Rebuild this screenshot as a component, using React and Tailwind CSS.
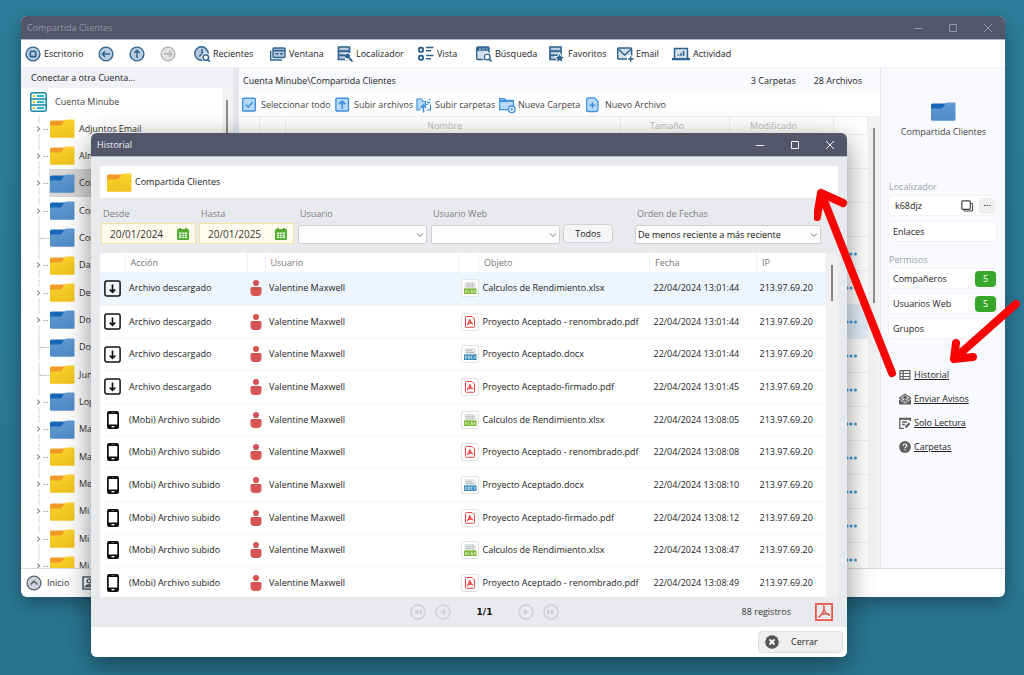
import React from "react";

const NAVY = "#2f6391";
const PALE = "#b9cbdc";
const SKY = "#3d8fe0";
const SKYPALE = "#b9d9f9";

function Folder({ blue }) {
  const id = blue ? "folder-blue" : "folder-yellow";
  return (
    <svg viewBox="0 0 25 19" className="h-[19px] w-[25px] shrink-0" aria-hidden="true">
      <defs>
        <linearGradient id={id} x1="0" y1="0" x2="0" y2="1">
          <stop offset="0" stopColor={blue ? "#629bd2" : "#fbd32e"} />
          <stop offset="1" stopColor={blue ? "#4f8bc6" : "#f0c31c"} />
        </linearGradient>
      </defs>
      <path d="M0 3Q0 1.500 1.500 1.500H15V9H0Z" fill={blue ? "#1667b8" : "#f19a26"} />
      <path d="M0 6.500H10C13 6.500 13 0.500 17 0.500H23.500Q24.500 0.500 24.500 1.500V17.500Q24.500 18.800 23.200 18.800H1.300Q0 18.800 0 17.500Z" fill={`url(#${id})`} />
    </svg>
  );
}

const svg = (children, className = "h-4 w-4") => (
  <svg viewBox="0 0 16 16" className={`${className} shrink-0 overflow-visible`} fill="none" strokeWidth="1.4" aria-hidden="true">
    {children}
  </svg>
);

const circle = (stroke, fill, path, w = 1.5) => (
  <g stroke={stroke}>
    <circle cx="8" cy="8" r="6.900" fill={fill} />
    <path d={path} strokeWidth={w} />
  </g>
);

const icons = {
  desk: svg(
    <g stroke={NAVY}>
      <circle cx="8" cy="8" r="6.900" fill={PALE} />
      <rect x="5.300" y="5.300" width="5.400" height="5.400" rx="1" strokeWidth="1.700" />
    </g>
  ),
  back: svg(circle(NAVY, PALE, "M12 8H4.500M7 5.300L4.300 8L7 10.700")),
  up: svg(circle(NAVY, PALE, "M8 12V4.500M5.300 7L8 4.300L10.700 7")),
  forward: svg(circle("#b4b4b4", "#e2e2e2", "M4 8H11.500M9 5.300L11.700 8L9 10.700")),
  recent: svg(
    <g stroke={NAVY}>
      <circle cx="7.500" cy="7.500" r="6.700" fill={PALE} />
      <path d="M8 3V8L5 10.500" strokeWidth="1.600" />
      <circle cx="11.800" cy="11.500" r="4.500" fill="#fff" stroke="none" />
      <circle cx="11.800" cy="11.500" r="2.800" strokeWidth="1.500" />
      <path d="M13.800 13.500L15.800 15.700" strokeWidth="1.700" />
    </g>
  ),
  window: svg(
    <g stroke={NAVY}>
      <path d="M0.700 4.500V14H12" />
      <rect x="3" y="2" width="12" height="9.500" rx="1" fill={PALE} />
      <path d="M3 4.700H15" strokeWidth="1.800" />
      <path d="M5.500 7.800H8.500M10 7.800H13" stroke={NAVY} />
    </g>
  ),
  locate: svg(
    <g stroke={NAVY}>
      <path d="M1.500 1H12.500V13.500H1.500Z" fill={PALE} strokeWidth="1.700" />
      <path d="M1 5.200H12.500M1 9.400H12.500" strokeWidth="1.700" />
      <path d="M8 7H14V14H8Z" fill="#fff" stroke="none" />
      <circle cx="10.500" cy="10" r="2.500" fill={NAVY} stroke="none" />
      <path d="M12 11.500L15.500 15.500M13 14.500L14.500 13" strokeWidth="1.700" />
    </g>
  ),
  view: svg(
    <g stroke={NAVY}>
      <rect x="1" y="1.700" width="4" height="4" rx="1" strokeWidth="1.900" />
      <rect x="1" y="9.700" width="4" height="4" rx="1" strokeWidth="1.900" />
      <path d="M8 1.500H15.500M8 4.700H13M8 9.500H15.500M8 12.700H13" strokeWidth="1.500" />
    </g>
  ),
  search: svg(
    <g stroke={NAVY}>
      <path d="M0.700 2.500V12Q0.700 13.500 2 13.500H13V2.500Q13 1 12 1H2Q0.700 1 0.700 2.500Z" fill="#d4dfe9" />
      <path d="M0.700 3H13" strokeWidth="3.400" />
      <path d="M3 3H5M6.500 3H8.500M10 3H11.500" stroke="#d4dfe9" strokeWidth="1" />
      <circle cx="11.200" cy="11" r="4.500" fill="#fff" stroke="none" />
      <circle cx="11.200" cy="11" r="2.900" />
      <path d="M13.300 13.200L15.500 15.500" strokeWidth="1.700" />
    </g>
  ),
  favorite: svg(
    <g stroke={NAVY}>
      <path d="M1 1H12V13.500H1Z" fill={PALE} strokeWidth="1.700" />
      <path d="M1 5.200H12M1 9.400H12" strokeWidth="1.700" />
      <path d="M10.700 6.800L12.300 10.200L15.900 10.600L13.200 13L14 16.500L10.700 14.700L7.400 16.500L8.200 13L5.500 10.600L9.100 10.200Z" fill={NAVY} stroke="#fff" strokeWidth="1" />
    </g>
  ),
  email: svg(
    <g stroke={NAVY}>
      <rect x="0.700" y="2" width="14" height="11" rx="1" fill="#d4dfe9" />
      <path d="M1 3L7.700 9L14.500 3" />
      <path d="M10 9.500H17V16.500H10Z" fill="#fff" stroke="none" />
      <path d="M11 13H16.500M13.700 10.300V15.700" strokeWidth="1.500" />
    </g>
  ),
  activity: (
    <svg viewBox="0 0 18 16" className="h-4 w-[18px] shrink-0" fill="none" stroke={NAVY} aria-hidden="true">
      <path d="M2.500 12V2.500H15.500V12" fill="#d4dfe9" strokeWidth="1.500" />
      <path d="M0 13.200H18" strokeWidth="2.300" />
      <path d="M6.500 10V8.500M9 10V7M11.500 10V5" strokeWidth="1.400" />
    </svg>
  ),
  check: svg(
    <g stroke={SKY}>
      <rect x="0.700" y="1.200" width="12.600" height="12.800" rx="1" fill={SKYPALE} />
      <path d="M3.700 7.500L6.200 10.200L10.700 5" strokeWidth="1.500" />
    </g>,
    "h-4 w-4"
  ),
  upFile: svg(
    <g stroke={SKY}>
      <rect x="0.900" y="1.200" width="12.600" height="12.800" rx="1" fill={SKYPALE} />
      <path d="M7.200 12V4.500M4.200 7.200L7.200 4.200L10.200 7.200" strokeWidth="1.700" />
    </g>
  ),
  upFolder: svg(
    <g stroke={SKY}>
      <path d="M4.500 13H1V2H5.500L7 4.500H9.500V7.500H12" fill={SKYPALE} strokeWidth="1.200" />
      <path d="M10.500 13H14.500V7.500M11 4.500L12.500 6L14.500 5M13 3L14.500 2" strokeWidth="1.200" />
      <path d="M7.500 15.500V8M4.800 10.700L7.500 8L10.200 10.700" strokeWidth="1.600" />
    </g>
  ),
  newFolder: svg(
    <g stroke={SKY}>
      <path d="M0.700 1.700H5.500L7 3.700H14.500V12.700H0.700Z" fill={SKYPALE} strokeWidth="1.200" />
      <path d="M0.700 4H7L8 3.700H14.500" strokeWidth="1.900" />
      <circle cx="12.800" cy="12.300" r="3.300" fill="#fff" />
      <path d="M11.200 12.300H14.400M12.800 10.700V13.900" strokeWidth="1.100" />
    </g>
  ),
  newFile: svg(
    <g stroke={SKY}>
      <path d="M0.700 2.300Q0.700 0.800 2.200 0.800H8.500L12 4.500V13Q12 14.500 10.500 14.500H2.200Q0.700 14.500 0.700 13Z" fill={SKYPALE} strokeWidth="1.300" />
      <path d="M3.400 8.200H9.400M6.400 5.200V11.200" strokeWidth="1.500" />
    </g>
  ),
  start: svg(circle("#5a6370", "#cdd3da", "M4.500 9.500L8 6.200L11.500 9.500", 1.7)),
  contact: svg(
    <g stroke="#5a6370">
      <path d="M15 2H1V14H15" strokeWidth="1.600" />
      <circle cx="7" cy="6" r="1.900" />
      <path d="M3.500 11.500Q7 8 10.500 11.500Z" />
    </g>
  ),
};

const mainTools = [
  ["desk", "Escritorio", "w-[73px]"],
  ["back", "", "w-[31px]"],
  ["up", "", "w-[31px]"],
  ["forward", "", "w-[34px]"],
  ["recent", "Recientes", "w-[76px]"],
  ["window", "Ventana", "w-[67px]"],
  ["locate", "Localizador", "w-[81px]"],
  ["view", "Vista", "w-[58px]"],
  ["search", "Búsqueda", "w-[73px]"],
  ["favorite", "Favoritos", "w-[68px]"],
  ["email", "Email", "w-[55px]"],
  ["activity", "Actividad", "w-[62px]"],
];

const toolNames = { back: "Atrás", up: "Subir", forward: "Adelante" };

const fileTools = [
  ["check", "Seleccionar todo", "w-[93px]"],
  ["upFile", "Subir archivos", "w-[81px]"],
  ["upFolder", "Subir carpetas", "w-[83px]"],
  ["newFolder", "Nueva Carpeta", "w-[87px]"],
  ["newFile", "Nuevo Archivo", "w-[84px]"],
];

const tree = [
  ["Adjuntos Email", false, true],
  ["Alm", false, true],
  ["Com", true, true],
  ["Com", true, true],
  ["Com", true, false],
  ["Dat", false, true],
  ["Dep", false, true],
  ["Doc", true, true],
  ["Doc", true, false],
  ["Jun", false, false],
  ["Log", true, true],
  ["Ma", true, true],
  ["Ma", false, true],
  ["Me", false, true],
  ["Mi", false, true],
  ["Mi", false, true],
  ["Mi", false, true],
];

const D = "Archivo descargado";
const M = "(Mobi) Archivo subido";
const rows = [
  [D, "xlsx", "Calculos de Rendimiento.xlsx", "13:01:44"],
  [D, "pdf", "Proyecto Aceptado - renombrado.pdf", "13:01:44"],
  [D, "docx", "Proyecto Aceptado.docx", "13:01:44"],
  [D, "pdf", "Proyecto Aceptado-firmado.pdf", "13:01:45"],
  [M, "xlsx", "Calculos de Rendimiento.xlsx", "13:08:05"],
  [M, "pdf", "Proyecto Aceptado - renombrado.pdf", "13:08:08"],
  [M, "docx", "Proyecto Aceptado.docx", "13:08:10"],
  [M, "pdf", "Proyecto Aceptado-firmado.pdf", "13:08:12"],
  [M, "xlsx", "Calculos de Rendimiento.xlsx", "13:08:47"],
  [M, "pdf", "Proyecto Aceptado - renombrado.pdf", "13:08:49"],
];

function TitleBar({ title, active }) {
  return (
    <header
      className={`flex h-6 shrink-0 items-center justify-between border-b border-[#b4b6c0] bg-[#535669] pr-3 pl-1.5 ${
        active ? "text-[#f0f0f4]" : "text-[#9295a4]"
      }`}
    >
      <h1>{title}</h1>
      <div className="flex items-center gap-[25px]">
        {[
          ["Minimizar", "M1 5.500H9"],
          ["Maximizar", "M1.500 1.500H8.500V8.500H1.500Z"],
          ["Cerrar ventana", "M1 1L9 9M9 1L1 9"],
        ].map(([name, d]) => (
          <button key={name} aria-label={name}>
            <svg viewBox="0 0 10 10" className="h-2.5 w-2.5" fill="none" stroke="currentColor" strokeWidth="1">
              <path d={d} />
            </svg>
          </button>
        ))}
      </div>
    </header>
  );
}

function Toolbar({ items }) {
  return items.map(([icon, label, width]) => (
    <button
      key={icon}
      aria-label={label || toolNames[icon]}
      className={`flex shrink-0 items-center gap-[3px] whitespace-nowrap ${width}`}
    >
      {icons[icon]}
      {label}
    </button>
  ));
}

function TreeRow({ name, blue, chevron, selected }) {
  return (
    <li className="h-[27px] nth-[3n]:h-7">
      <button className="flex h-full w-full items-center pl-3 text-left text-[#333]">
        <svg viewBox="0 0 17 28" className="h-7 w-4 shrink-0" fill="none" stroke="#a8a8a8" aria-hidden="true">
          <path d={chevron ? "M6.500 0V8M6.500 20V28" : "M6.500 0V28"} strokeDasharray="1 1" />
          <path d={chevron ? "M11 14.500H17" : "M7 14.500H17"} strokeDasharray="2 1" />
          {chevron && <path d="M4.500 11.500L7 14L4.500 16.500" stroke="#888" strokeWidth="1.200" />}
        </svg>
        <span className={`flex h-full flex-1 items-center gap-1 pl-px ${selected ? "bg-[#d7d7d7]" : ""}`}>
          <Folder blue={blue} />
          {name}
        </span>
      </button>
    </li>
  );
}

function Sidebar() {
  return (
    <aside className="flex w-[212px] shrink-0 flex-col">
      <button className="h-5 shrink-0 bg-[#f0f2f7] pl-2.5 text-left text-[#222]">Conectar a otra Cuenta...</button>
      <div className="flex min-h-0 flex-1">
        <div className="min-w-0 flex-1 overflow-hidden">
          <div className="flex h-[27px] items-center gap-2 pl-[9px] text-[#444]">
            <svg viewBox="0 0 17 20" className="h-5 w-[17px]" fill="none" stroke="#1d86ab" aria-hidden="true">
              <rect x="0.800" y="0.800" width="15.400" height="18.400" rx="2" fill="#eafaff" strokeWidth="1.500" />
              <path d="M1 7H16M1 13H16" strokeWidth="1.500" />
              <path d="M7 4H14M7 10H14M7 16H14" stroke="#27b5cf" strokeWidth="1.800" />
              <path d="M3 4H5M3 10H5M3 16H5" stroke="#f3c313" strokeWidth="2.200" />
            </svg>
            Cuenta Minube
          </div>
          <ul>
            {tree.map(([name, blue, chevron], i) => (
              <TreeRow key={i} name={name} blue={blue} chevron={chevron} selected={i === 2} />
            ))}
          </ul>
        </div>
        <div className="w-[11px] bg-[#f3f3f3] px-1 pt-3">
          <div className="h-36 w-0.5 bg-[#8a8a8a]" />
        </div>
      </div>
    </aside>
  );
}

function FileTable() {
  return (
    <div className="flex min-h-0 flex-1 overflow-hidden">
      <div className="min-w-0 flex-1">
        <table className="w-full table-fixed border-collapse">
          <colgroup>
            <col className="w-5" />
            <col className="w-[26px]" />
            <col />
            <col className="w-[109px]" />
            <col className="w-[104px]" />
            <col className="w-[34px]" />
          </colgroup>
          <thead>
            <tr className="h-[18px] border-y border-[#efefef] text-[#bdbdbd] [&>th]:border-r [&>th]:border-[#efefef] [&>th]:py-0 [&>th]:pr-4 [&>th]:pl-0 [&>th]:font-normal">
              <th />
              <th />
              <th>Nombre</th>
              <th>Tamaño</th>
              <th>Modificado</th>
              <th />
            </tr>
          </thead>
          <tbody>
            {Array.from({ length: 13 }, (_, i) => (
              <tr key={i} className={`h-[34px] border-b border-[#efefef] ${i === 5 ? "bg-[#e4effa]" : ""}`}>
                <td colSpan={5} />
                <td className="p-0">
                  {i > 2 && (
                    <button aria-label="Opciones" className="flex pl-[11px]">
                      <svg viewBox="0 0 12 4" className="h-1 w-3" fill="#3d9ad6">
                        <circle cx="2" cy="2" r="1.500" />
                        <circle cx="6" cy="2" r="1.500" />
                        <circle cx="10.500" cy="2" r="1.500" />
                      </svg>
                    </button>
                  )}
                </td>
              </tr>
            ))}
          </tbody>
        </table>
      </div>
      <div className="w-3 bg-[#f1f1f1] px-[5px] pt-3">
        <div className="h-[175px] w-0.5 bg-[#8f8f8f]" />
      </div>
    </div>
  );
}

function Badge() {
  return <span className="flex h-4 w-[21px] items-center justify-center rounded-sm bg-[#38a52b] text-white">5</span>;
}

const linkIcons = [
  ["Historial", (
    <g>
      <rect x="0.500" y="1" width="11" height="10" fill="#5f5f5f" />
      <path d="M1.700 2.300H3.500V4H1.700ZM4.800 2.300H10.300V4H4.800ZM1.700 5.100H3.500V6.900H1.700ZM4.800 5.100H10.300V6.900H4.800ZM1.700 8H3.500V9.800H1.700ZM4.800 8H10.300V9.800H4.800Z" fill="#fff" />
    </g>
  )],
  ["Enviar Avisos", (
    <g>
      <path d="M0 4.500L6 0.500L12 4.500V11.500H0Z" fill="#5f5f5f" />
      <path d="M1.700 4.700L6 1.700L10.300 4.700L6 8.500Z" fill="#f8fafd" />
      <path d="M6 8V3.500M3.600 5.500L6 3.100L8.400 5.500" stroke="#5f5f5f" strokeWidth="1.500" fill="none" />
      <path d="M0 5.800L6 10L12 5.800" stroke="#f8fafd" strokeWidth="0.800" fill="none" />
    </g>
  )],
  ["Solo Lectura", (
    <g stroke="#5f5f5f" strokeWidth="1.300" fill="none">
      <path d="M5 11.300H0.800V1.300H11.300V4" />
      <path d="M0.800 2H11.300" strokeWidth="1.800" />
      <path d="M3 5H8M3 7.500H6" />
      <path d="M6.500 10.500L10.500 6.300" strokeWidth="2.300" />
    </g>
  )],
  ["Carpetas", (
    <g>
      <circle cx="6" cy="6" r="5.900" fill="#5f5f5f" />
      <path d="M4.200 4.700Q4.200 3 6 3Q7.800 3 7.800 4.600Q7.800 5.500 6.700 6Q6 6.400 6 7.200M6 8.300V9.500" stroke="#fff" strokeWidth="1.200" fill="none" />
    </g>
  )],
];

function Details() {
  const box = "flex h-[21px] items-center justify-between rounded-sm border border-[#f1f2f5] bg-white pl-1";
  return (
    <aside className="w-[125px] shrink-0 border-l border-[#e4e6ec] bg-[#f8fafd] pr-2 pl-[7px] text-[#222]">
      <div className="flex flex-col items-center gap-[5px] pt-[34px] pl-0.5 text-[#444]">
        <Folder blue />
        <p className="whitespace-nowrap">Compartida Clientes</p>
      </div>
      <h2 className="mt-[43px] mb-0.5 pl-px text-[#9aa3b0]">Localizador</h2>
      <div className={box}>
        <span className="pl-0.5">k68djz</span>
        <span className="flex items-center gap-1.5">
          <button aria-label="Copiar">
            <svg viewBox="0 0 12 12" className="h-3 w-3" fill="none" stroke="#444">
              <path d="M3 9V11H11.500V3.500H9.500" />
              <rect x="0.800" y="0.800" width="8.500" height="8.500" rx="1" strokeWidth="1.200" />
            </svg>
          </button>
          <button aria-label="Más" className="mr-px flex h-4 w-4 items-center justify-center rounded-sm bg-[#eee]">
            <svg viewBox="0 0 8 2" className="h-0.5 w-2" fill="#555">
              <path d="M1 0H2.500V1H1ZM3.500 0H5V1H3.500ZM6 0H7.500V1H6Z" />
            </svg>
          </button>
        </span>
      </div>
      <div className={`mt-[5px] ${box}`}>Enlaces</div>
      <h2 className="mt-3 mb-0.5 pl-px text-[#9aa3b0]">Permisos</h2>
      <div className="flex flex-col gap-1">
        <div className={box}>Compañeros<Badge /></div>
        <div className={box}>Usuarios Web<Badge /></div>
        <div className={box}>Grupos</div>
      </div>
      <nav className="mt-6 flex flex-col pl-[11px]">
        {linkIcons.map(([label, icon]) => (
          <a key={label} href="#" className="flex h-6 items-center gap-[3px] underline">
            <svg viewBox="0 0 12 12" className="h-3 w-3" aria-hidden="true">{icon}</svg>
            {label}
          </a>
        ))}
      </nav>
    </aside>
  );
}

function DateField({ id, label, value }) {
  return (
    <div className="flex w-[95px] flex-col gap-[3px]">
      <label htmlFor={id} className="pl-0.5 text-[#7d7f88]">{label}</label>
      <div className="flex h-[21px] items-center border border-[#f2e3a2] bg-[#fffbee] pr-1.5 pl-2">
        <input id={id} defaultValue={value} className="w-full min-w-0 bg-transparent text-[10px] text-[#333] outline-none" />
        <button type="button" aria-label={`Abrir calendario ${label}`}>
          <svg viewBox="0 0 12 12" className="h-3 w-3" aria-hidden="true">
            <path d="M0 2Q0 1 1 1H2V0H4V1H8V0H10V1H11Q12 1 12 2V11Q12 12 11 12H1Q0 12 0 11Z" fill="#57ad32" />
            <path d="M2 4.500H10V10H2Z" fill="#fff" />
            <path d="M2 6.300H10M2 8.200H10M4.600 4.500V10M7.300 4.500V10" stroke="#57ad32" strokeWidth="0.800" />
          </svg>
        </button>
      </div>
    </div>
  );
}

function SelectField({ id, label, width, children }) {
  return (
    <div className={`flex flex-col gap-[5px] ${width}`}>
      <label htmlFor={id} className="pl-0.5 text-[#7d7f88]">{label}</label>
      <div className="relative">
        <select id={id} className="block h-[19px] w-full appearance-none rounded-xs border border-[#cfcfd3] bg-[#fdfdfd] pl-0.5 text-[#111] outline-none">
          {children}
        </select>
        <svg viewBox="0 0 8 8" className="pointer-events-none absolute top-1.5 right-[3px] h-2 w-2" fill="none" stroke="#777">
          <path d="M1 2.500L4 5.500L7 2.500" />
        </svg>
      </div>
    </div>
  );
}

const actionIcon = (action) =>
  action === D ? (
    <svg viewBox="0 0 17 17" className="mx-auto h-[17px] w-[17px]" fill="none" stroke="#111" aria-hidden="true">
      <rect x="0.900" y="0.900" width="15.200" height="15.200" rx="2" strokeWidth="1.500" />
      <path d="M8.500 4.500V12M5.700 9.500L8.500 12.200L11.300 9.500" strokeWidth="1.700" />
    </svg>
  ) : (
    <svg viewBox="0 0 12 18" className="mx-auto h-[18px] w-3" aria-hidden="true">
      <rect width="12" height="18" rx="2.200" fill="#0c0c0c" />
      <path d="M1.700 3H10.300V13.500H1.700Z" fill="#fff" />
      <path d="M4.500 15.700H7.500" stroke="#fff" strokeWidth="1.300" />
      <path d="M4.500 1.500H7.500" stroke="#888" strokeWidth="0.600" />
    </svg>
  );

const Person = (
  <svg viewBox="0 0 12 16" className="mx-auto h-4 w-3" fill="#d45553" aria-hidden="true">
    <circle cx="6" cy="3" r="3" />
    <path d="M2 7H10Q11.500 7 11.500 8.500V12Q11.500 16 7.500 16H4.500Q0.500 16 0.500 12V8.500Q0.500 7 2 7Z" />
  </svg>
);

function FileIcon({ type }) {
  const color = type === "xlsx" ? "#79b52c" : "#2f87b7";
  return (
    <svg viewBox="0 0 18 18" className="h-[18px] w-[18px]" aria-hidden="true">
      <rect x="0.500" y="0.500" width="17" height="17" rx="1.500" fill="#fff" stroke="#e2e2e2" />
      {type === "pdf" ? (
        <g fill="none" stroke="#ee4540">
          <path d="M5.500 3.500H11L13.500 6V13.500Q13.500 14.300 12.700 14.300H5.300Q4.500 14.300 4.500 13.500V4.500Q4.500 3.500 5.500 3.500Z" />
          <path d="M6.200 12Q8.700 9.500 8.700 6.300Q9.300 9.800 12 11M6.500 11Q9 9.800 11.500 10.400" strokeWidth="1.300" />
        </g>
      ) : (
        <g>
          <path d="M3.500 3H13L15 5V11H3.500Z" fill="#e3e5e7" />
          {type === "xlsx" ? (
            <path d="M4.500 5.500H13.500M4.500 7.500H13.500M6.500 3.500V9M9 3.500V9M11.500 3.500V9" stroke="#bfc2c4" strokeWidth="0.600" />
          ) : (
            <path d="M5 5.500H11M5 7.500H13" stroke="#aab0b5" strokeWidth="0.800" />
          )}
          <rect x="3" y="9.500" width="12.500" height="5.500" fill={color} />
          <g stroke="#fff" strokeWidth="0.600" fill="none">
            {type === "xlsx" ? (
              <path d="M4 11L6 13.700M6 11L4 13.700M7.300 10.800V13.700H8.800M11.500 11H10V12.300H11.500V13.700H9.800M12.700 11L14.500 13.700M14.500 11L12.700 13.700" />
            ) : (
              <path d="M4.300 11V13.700H5.500L6 12.300L5.500 11ZM7.300 11H8.800V13.700H7.300ZM11.700 11H10.300V13.700H11.700M12.800 11L14.500 13.700M14.500 11L12.800 13.700" />
            )}
          </g>
        </g>
      )}
    </svg>
  );
}

function HistoryTable() {
  return (
    <div className="flex min-h-0 flex-1 overflow-hidden">
      <div className="min-w-0 flex-1 overflow-hidden bg-white">
        <table className="w-full table-fixed border-collapse text-left text-[#222]">
          <colgroup>
            <col className="w-[25px]" />
            <col className="w-[122px]" />
            <col className="w-[18px]" />
            <col />
            <col className="w-5" />
            <col className="w-[171px]" />
            <col className="w-[107px]" />
            <col className="w-[69px]" />
          </colgroup>
          <thead>
            <tr className="h-[19px] text-[#777] [&>th]:border-r [&>th]:border-[#f1f1f3] [&>th]:py-0 [&>th]:pr-0 [&>th]:pl-[5px] [&>th]:font-normal">
              <th />
              <th>Acción</th>
              <th />
              <th>Usuario</th>
              <th />
              <th>Objeto</th>
              <th>Fecha</th>
              <th>IP</th>
            </tr>
          </thead>
          <tbody>
            {rows.map(([action, type, name, time], i) => (
              <tr
                key={i}
                className={`h-[33px] border-b border-[#f5f5f6] whitespace-nowrap nth-[3n]:h-8 ${
                  i === 0 ? "bg-[#edf6fe]" : ""
                }`}
              >
                <td className="p-0">{actionIcon(action)}</td>
                <td className="p-0 pl-1">{action}</td>
                <td className="p-0">{Person}</td>
                <td className="p-0 pl-1">Valentine Maxwell</td>
                <td className="p-0 pl-0.5"><FileIcon type={type} /></td>
                <td className="p-0 pl-1">{name}</td>
                <td className="p-0 pl-1">22/04/2024 {time}</td>
                <td className="p-0 pl-[3px]">213.97.69.20</td>
              </tr>
            ))}
          </tbody>
        </table>
      </div>
      <div className="w-3 bg-[#f0f0f0] px-[5px] pt-3">
        <div className="h-9 w-0.5 bg-[#858585]" />
      </div>
    </div>
  );
}

function PageButton({ name, d }) {
  return (
    <button aria-label={name}>
      <svg viewBox="0 0 16 16" className="h-4 w-4" fill="none" stroke="#d0d1d5">
        <circle cx="8" cy="8" r="7" strokeWidth="1.500" />
        <path d={d} fill="#d0d1d5" stroke="none" />
      </svg>
    </button>
  );
}

function HistoryDialog() {
  return (
    <section
      role="dialog"
      aria-label="Historial"
      className="absolute top-[133px] right-[177px] bottom-[18px] left-[91px] flex flex-col overflow-hidden rounded-md bg-[#e9eaee] shadow-[0_8px_28px_rgba(0,0,0,0.45)]"
    >
      <TitleBar title="Historial" active />
      <div className="flex min-h-0 flex-1 flex-col px-[9px] pt-[9px]">
        <div className="flex h-8 shrink-0 items-center gap-[3px] bg-white pl-[7px] text-[#222]">
          <Folder />
          Compartida Clientes
        </div>
        <form className="flex h-[55px] shrink-0 items-start pt-2.5 pl-px">
          <div className="flex gap-[3px]">
            <DateField id="desde" label="Desde" value="20/01/2024" />
            <DateField id="hasta" label="Hasta" value="20/01/2025" />
          </div>
          <div className="ml-1 flex gap-1">
            <SelectField id="usuario" label="Usuario" width="w-[129px]" />
            <SelectField id="usuario-web" label="Usuario Web" width="w-[129px]" />
          </div>
          <button type="button" className="mt-4 ml-[3px] h-[19px] w-[50px] rounded-sm border border-[#d3d3d7] bg-[#f5f5f6] text-[#222]">
            Todos
          </button>
          <div className="ml-auto pr-[17px]">
            <SelectField id="orden" label="Orden de Fechas" width="w-[186px]">
              <option>De menos reciente a más reciente</option>
            </SelectField>
          </div>
        </form>
        <HistoryTable />
      </div>
      <div className="flex h-[30px] shrink-0 items-center pr-3.5 pl-[319px] text-[#333]">
        <div className="flex items-center gap-[9px]">
          <PageButton name="Primera" d="M8 5V11L4 8ZM12 5V11L8 8Z" />
          <PageButton name="Anterior" d="M10 5V11L5.500 8Z" />
        </div>
        <strong className="w-[67px] text-center font-['DejaVu_Sans',sans-serif] text-[9px] text-[#111]">1/1</strong>
        <div className="flex items-center gap-[9px]">
          <PageButton name="Siguiente" d="M6 5V11L10.500 8Z" />
          <PageButton name="Última" d="M4 5V11L8 8ZM8 5V11L12 8Z" />
        </div>
        <span className="ml-auto pr-6">88 registros</span>
        <button aria-label="Exportar PDF">
          <svg viewBox="0 0 18 18" className="h-[18px] w-[18px]" fill="none" stroke="#e9503f" aria-hidden="true">
            <rect x="0.900" y="0.900" width="16.200" height="16.200" strokeWidth="1.700" />
            <path d="M8 3Q9.800 3 9 6Q8 11 3.500 14.500M8.600 4.500Q9.500 10.500 15 12.500M5.500 12Q10 9.800 15 11.500" strokeWidth="1.300" />
          </svg>
        </button>
      </div>
      <footer className="flex h-[30px] shrink-0 items-center justify-end bg-white pr-1">
        <button className="flex h-[22px] w-[85px] items-center gap-3 rounded-sm border border-[#dedede] bg-[#efefef] pl-1.5 text-[#222]">
          <svg viewBox="0 0 14 14" className="h-3.5 w-3.5" aria-hidden="true">
            <circle cx="7" cy="7" r="6.800" fill="#555" />
            <path d="M4.500 4.500L9.500 9.500M9.500 4.500L4.500 9.500" stroke="#fff" strokeWidth="1.800" />
          </svg>
          Cerrar
        </button>
      </footer>
    </section>
  );
}

export default function App() {
  return (
    <div className="relative flex h-screen flex-col overflow-hidden bg-linear-to-b from-[#2d7e9b] to-[#2a7591] pt-4 pr-[19px] pb-[78px] pl-[21px] font-['Open_Sans',sans-serif] text-[9px] leading-3">
      <main className="flex min-h-0 flex-1 flex-col overflow-hidden rounded-md bg-white shadow-[0_6px_20px_rgba(0,0,0,0.35)]">
        <TitleBar title="Compartida Clientes" />
        <nav className="flex h-7 shrink-0 items-center border-b border-[#eff1f5] pl-1 text-[#222]">
          <Toolbar items={mainTools} />
        </nav>
        <div className="flex min-h-0 flex-1">
          <Sidebar />
          <div className="w-1.5 shrink-0 bg-[#e6e7ed]" />
          <div className="flex min-w-0 flex-1 flex-col">
            <div className="flex h-[25px] shrink-0 items-center gap-[18px] bg-[#f8fafd] pr-[18px] pl-1 text-[#222]">
              <h2 className="mr-auto">Cuenta Minube\Compartida Clientes</h2>
              <span>3 Carpetas</span>
              <span>28 Archivos</span>
            </div>
            <nav className="flex h-[23px] shrink-0 items-center pl-[3px] text-[#444]">
              <Toolbar items={fileTools} />
            </nav>
            <FileTable />
          </div>
          <Details />
        </div>
        <footer className="flex h-[29px] shrink-0 items-center border-t border-[#dcdcdc] pl-[5px] text-[#333]">
          <button className="flex w-14 items-center gap-[5px]">{icons.start}Inicio</button>
          <button aria-label="Contactos">{icons.contact}</button>
        </footer>
      </main>
      <HistoryDialog />
      <svg
        viewBox="0 0 210 200"
        className="pointer-events-none absolute top-[184px] right-0 h-[200px] w-[210px]"
        fill="none"
        stroke="#f60505"
        strokeWidth="8"
        strokeLinecap="round"
        strokeLinejoin="round"
        aria-hidden="true"
      >
        <path d="M78 189L7 9M29 19L7 9L3 33" />
        <path d="M202 120L140 175M142 159L140 175L159 173" />
      </svg>
    </div>
  );
}
